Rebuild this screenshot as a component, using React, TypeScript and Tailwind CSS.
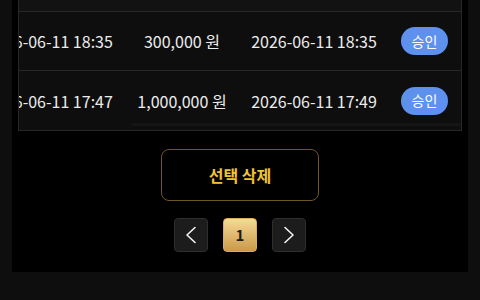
import React from 'react';

interface Row {
  requestedAt: string;
  amount: string;
  processedAt: string;
  status: string;
}

const rows: Row[] = [
  { requestedAt: '2026-06-11 18:35', amount: '300,000 원', processedAt: '2026-06-11 18:35', status: '승인' },
  { requestedAt: '2026-06-11 17:47', amount: '1,000,000 원', processedAt: '2026-06-11 17:49', status: '승인' },
];

const Chevron: React.FC<{ dir: 'left' | 'right' }> = ({ dir }) => (
  <svg width="12" height="18" viewBox="0 0 12 18" fill="none" stroke="#f2f2f2" strokeWidth="1.6" strokeLinecap="round" strokeLinejoin="round">
    {dir === 'left' ? <polyline points="10,1.5 2,9 10,16.5" /> : <polyline points="2,1.5 10,9 2,16.5" />}
  </svg>
);

const App: React.FC = () => {
  return (
    <div
      className="min-h-[300px] w-[480px] bg-[#0e0e0e] px-[12px]"
      style={{ fontFamily: '"Noto Sans CJK KR", "Noto Sans", sans-serif' }}
    >
      <div className="flex h-[272px] flex-col bg-black px-[6px]">
        {/* Table, scrolled sideways */}
        <div className="relative overflow-hidden border-x border-b border-[#282828] bg-[#0e0e0e]">
          <div className="h-[12px] border-b border-[#282828] bg-[#121212]" />
          {rows.map((r, i) => (
            <div
              key={i}
              className={`-ml-[35px] grid h-[59px] grid-cols-[132px_132px_132px_89px] items-center text-[16px] text-[#ececec] ${
                i < rows.length - 1 ? 'border-b border-[#282828]' : ''
              }`}
            >
              <div className="text-center whitespace-nowrap">{r.requestedAt}</div>
              <div className="text-center whitespace-nowrap">{r.amount}</div>
              <div className="text-center whitespace-nowrap">{r.processedAt}</div>
              <div className="flex justify-center">
                <span className="flex h-[28px] w-[47px] items-center justify-center rounded-full bg-[#5e90ee] text-[14px] text-white">
                  {r.status}
                </span>
              </div>
            </div>
          ))}
          {/* horizontal scrollbar thumb */}
          <div className="absolute bottom-[4px] left-[112px] h-[3px] w-[330px] rounded-full bg-[#151515]" />
        </div>

        <div className="mt-[18px] flex justify-center">
          <button className="h-[52px] w-[158px] rounded-[8px] border border-[#6e5528] text-[16px] font-bold text-[#f2c335]">
            선택 삭제
          </button>
        </div>

        <div className="mt-[17px] flex justify-center gap-[15px]">
          <button className="flex h-[34px] w-[34px] items-center justify-center rounded-[4px] border border-[#2e2e2e] bg-[#1c1c1c]">
            <Chevron dir="left" />
          </button>
          <button className="flex h-[34px] w-[34px] items-center justify-center rounded-[4px] border border-[#d9ad5c] bg-gradient-to-b from-[#f7d996] to-[#c99a48] text-[15px] font-bold text-[#1e1a12]">
            1
          </button>
          <button className="flex h-[34px] w-[34px] items-center justify-center rounded-[4px] border border-[#2e2e2e] bg-[#1c1c1c]">
            <Chevron dir="right" />
          </button>
        </div>
      </div>
    </div>
  );
};

export default App;
